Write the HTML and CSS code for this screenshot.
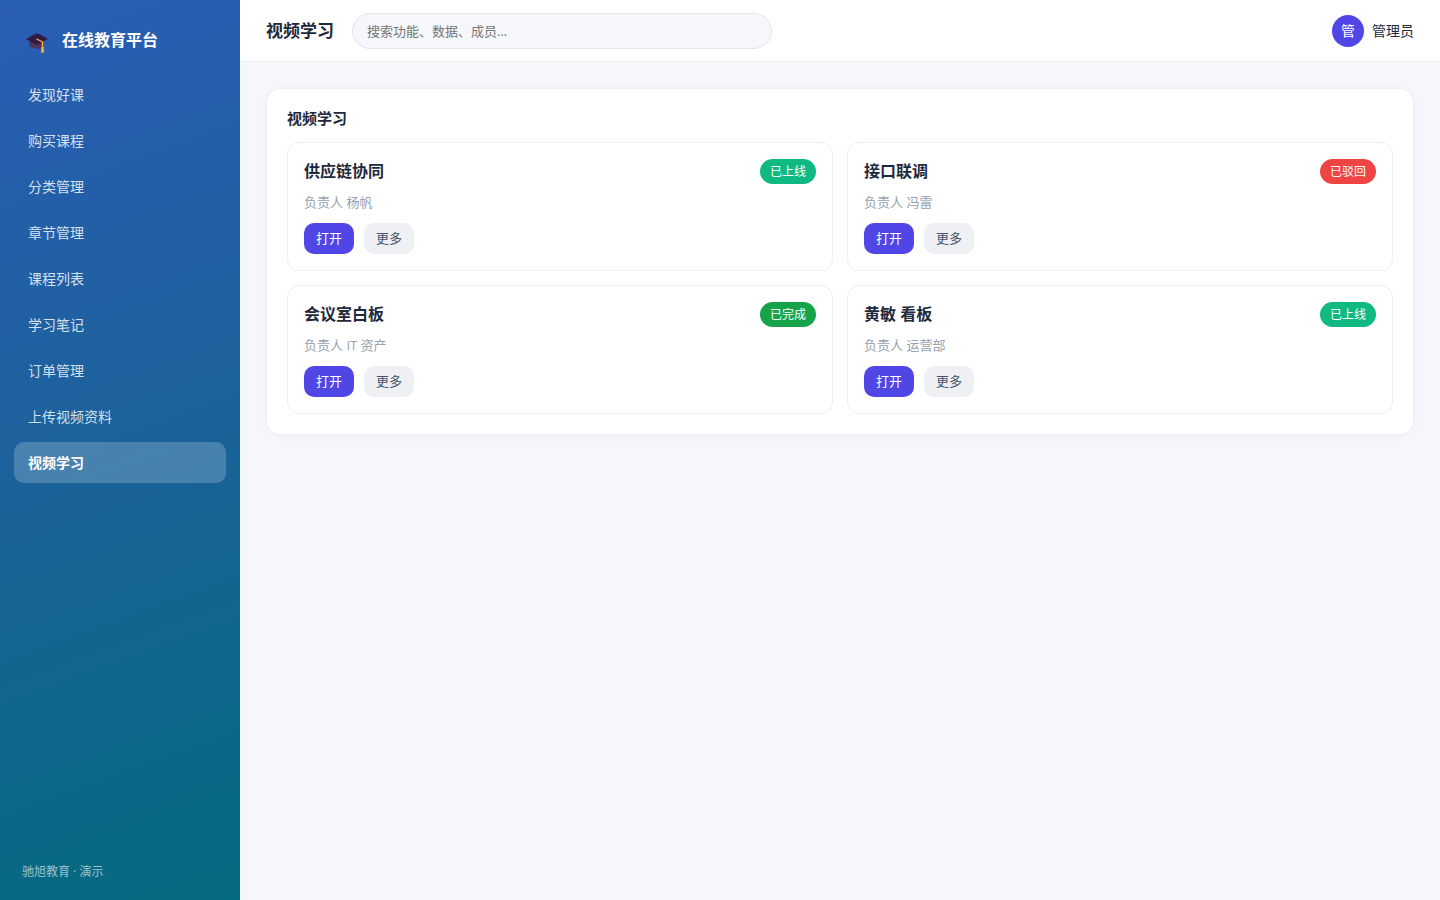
FILE: index.html
```html
<!DOCTYPE html>
<html lang="zh-CN">
<head>
  <meta charset="UTF-8">
  <meta name="viewport" content="width=device-width, initial-scale=1.0">
  <title>在线教育平台</title>
  <link rel="stylesheet" href="styles.css">
</head>
<body>
<div class="layout">
  <aside class="sidebar">
    <div class="brand">
      <svg class="brand-icon" viewBox="0 -6 22 26" aria-hidden="true">
        <path d="M3 8v4q1 2 4 3l6 1 3-2V8z" fill="#50335f"/>
        <path d="M0 6L9 1q2-1 4 0l9 5-9 5q-2 1-4 0z" fill="#2f1b45"/>
        <path d="M10.500 6L16.500 9v6" fill="none" stroke="#fdb02d" stroke-width="1.300"/>
        <path d="M15.500 14h2.200v2l.5 1-.7 3-2.500-.5z" fill="#fdb02d"/>
      </svg>
      <span>在线教育平台</span>
    </div>
    <nav class="nav">
      <a href="#">发现好课</a>
      <a href="#">购买课程</a>
      <a href="#">分类管理</a>
      <a href="#">章节管理</a>
      <a href="#">课程列表</a>
      <a href="#">学习笔记</a>
      <a href="#">订单管理</a>
      <a href="#">上传视频资料</a>
      <a href="#" class="active">视频学习</a>
    </nav>
    <div class="sidebar-foot">驰旭教育 · 演示</div>
  </aside>

  <div class="main">
    <header class="topbar">
      <h1>视频学习</h1>
      <input type="search" class="search" aria-label="搜索" placeholder="搜索功能、数据、成员…">
      <div class="user">
        <span class="avatar">管</span>
        <span>管理员</span>
      </div>
    </header>

    <main class="content">
      <section class="panel">
        <h2>视频学习</h2>
        <div class="grid">
          <article class="card">
            <div class="card-head">
              <h3>供应链协同</h3>
              <span class="badge online">已上线</span>
            </div>
            <p class="meta">负责人 杨帆</p>
            <div class="actions">
              <button type="button" class="btn primary">打开</button>
              <button type="button" class="btn">更多</button>
            </div>
          </article>
          <article class="card">
            <div class="card-head">
              <h3>接口联调</h3>
              <span class="badge rejected">已驳回</span>
            </div>
            <p class="meta">负责人 冯雷</p>
            <div class="actions">
              <button type="button" class="btn primary">打开</button>
              <button type="button" class="btn">更多</button>
            </div>
          </article>
          <article class="card">
            <div class="card-head">
              <h3>会议室白板</h3>
              <span class="badge done">已完成</span>
            </div>
            <p class="meta">负责人 IT 资产</p>
            <div class="actions">
              <button type="button" class="btn primary">打开</button>
              <button type="button" class="btn">更多</button>
            </div>
          </article>
          <article class="card">
            <div class="card-head">
              <h3>黄敏 看板</h3>
              <span class="badge online">已上线</span>
            </div>
            <p class="meta">负责人 运营部</p>
            <div class="actions">
              <button type="button" class="btn primary">打开</button>
              <button type="button" class="btn">更多</button>
            </div>
          </article>
        </div>
      </section>
    </main>
  </div>
</div>
</body>
</html>
```

FILE: styles.css
```css
* {
  box-sizing: border-box;
}
body {
  margin: 0;
  background: #f5f7fb;
  color: #1e293b;
  font-family: "Open Sans", "Noto Sans CJK SC", sans-serif;
  font-size: 14px;
  line-height: 21px;
}
h1, h2, h3, p {
  margin: 0;
}
.layout {
  display: flex;
  min-height: 100vh;
}

/* Sidebar */
.sidebar {
  display: flex;
  flex-direction: column;
  flex: 0 0 240px;
  padding: 18px 14px;
  background: linear-gradient(160deg, #2a5db4, #1b629a 50%, #046a7e);
  color: #fff;
}
.brand {
  display: flex;
  align-items: center;
  gap: 14px;
  padding: 9px 12px;
  margin-bottom: 12px;
  font-size: 16px;
  line-height: 24px;
  font-weight: 700;
}
.brand-icon {
  width: 22px;
  height: 26px;
}
.nav {
  display: flex;
  flex-direction: column;
  gap: 5px;
}
.nav a {
  padding: 10px 14px;
  border-radius: 10px;
  color: rgba(255, 255, 255, 0.82);
  text-decoration: none;
}
.nav a.active {
  background: rgba(255, 255, 255, 0.2);
  color: #fff;
  font-weight: 700;
}
.sidebar-foot {
  margin-top: auto;
  padding: 0 8px;
  font-size: 12px;
  color: rgba(255, 255, 255, 0.6);
}

/* Top bar */
.main {
  flex: 1;
  min-width: 0;
}
.topbar {
  display: flex;
  align-items: center;
  gap: 18px;
  height: 62px;
  padding: 0 26px;
  background: #fff;
  border-bottom: 1px solid #eef0f4;
}
.topbar h1 {
  font-size: 17px;
  line-height: 26px;
}
.search {
  flex: 0 1 420px;
  min-width: 0;
  height: 36px;
  padding: 0 14px;
  border: 1px solid #e2e5ec;
  border-radius: 18px;
  background: #f5f7fb;
  color: #1e293b;
  font: inherit;
  font-size: 13px;
}
.search::placeholder {
  color: #757575;
}
.user {
  display: flex;
  align-items: center;
  gap: 8px;
  margin-left: auto;
}
.avatar {
  width: 32px;
  height: 32px;
  border-radius: 50%;
  background: #4f46e5;
  color: #fff;
  line-height: 32px;
  text-align: center;
}

/* Content */
.content {
  padding: 26px;
}
.panel {
  padding: 20px;
  border: 1px solid #eef0f4;
  border-radius: 14px;
  background: #fff;
  box-shadow: 0 2px 8px rgba(15, 23, 42, 0.03);
}
.panel h2 {
  margin-bottom: 14px;
  font-size: 15px;
  line-height: 19px;
}
.grid {
  display: grid;
  grid-template-columns: repeat(2, minmax(0, 1fr));
  gap: 14px;
}
.card {
  padding: 16px;
  border: 1px solid #eeeff2;
  border-radius: 12px;
}
.card-head {
  display: flex;
  align-items: center;
  justify-content: space-between;
}
.card h3 {
  font-size: 16px;
  line-height: 25px;
}
.badge {
  padding: 2px 10px;
  border-radius: 13px;
  color: #fff;
  font-size: 12px;
}
.badge.online {
  background: #10b981;
}
.badge.rejected {
  background: #ef4444;
}
.badge.done {
  background: #16a34a;
}
.meta {
  margin: 8px 0 10px;
  font-size: 13px;
  color: #98a1b0;
}
.actions {
  display: flex;
  gap: 10px;
}
.btn {
  padding: 5px 12px;
  border: none;
  border-radius: 10px;
  background: #eef0f4;
  color: #475569;
  font: inherit;
  font-size: 13px;
  cursor: pointer;
}
.btn.primary {
  background: #4f46e5;
  color: #fff;
}
```
